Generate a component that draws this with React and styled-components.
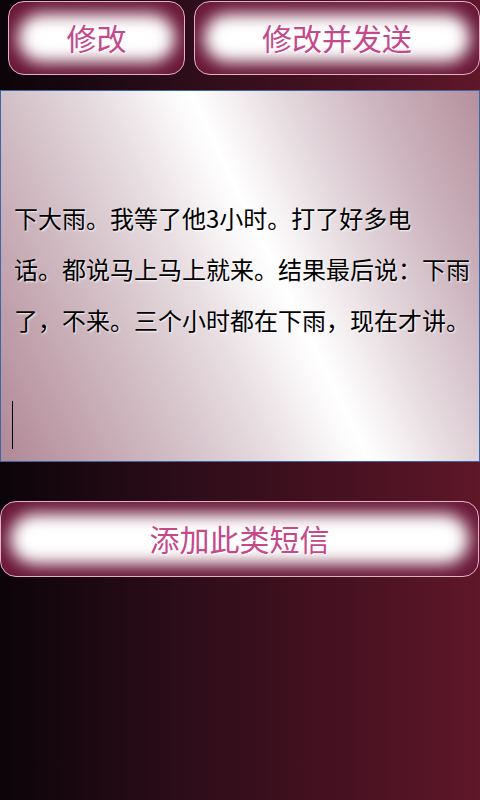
import React from 'react';
import styled, { createGlobalStyle } from 'styled-components';

const Global = createGlobalStyle`
  html, body {
    margin: 0;
    padding: 0;
    height: 100%;
  }
  body {
    font-family: "Noto Sans CJK SC", "Noto Sans", sans-serif;
  }
  #root {
    height: 100%;
  }
`;

const Page = styled.div`
  width: 480px;
  height: 800px;
  overflow: hidden;
  display: flex;
  flex-direction: column;
  background: linear-gradient(90deg, #0c0408 0%, #2a0c18 35%, #4a1222 75%, #5f1729 100%);
`;

const TopRow = styled.div`
  display: flex;
  gap: 9px;
  padding: 1px 0 0 8px;
`;

const GlowButton = styled.button`
  position: relative;
  width: ${(p) => p.$w}px;
  height: ${(p) => p.$h}px;
  padding: 0;
  border: 1px solid #e2b2c4;
  border-radius: 16px;
  background: #6a1838;
  display: flex;
  align-items: center;
  justify-content: center;
  font-family: "Noto Sans CJK SC", "Noto Sans", sans-serif;
  font-size: 30px;
  color: #c4488a;
  text-shadow: 1px 1px 1px #fff, 0 0 2px #fff;
  overflow: hidden;
  cursor: pointer;

  &::before {
    content: '';
    position: absolute;
    inset: 12px 9px;
    border-radius: 28px;
    background: #fff;
    filter: blur(8px);
  }

  span {
    position: relative;
    margin-top: -2px;
  }
`;

const Editor = styled.div`
  margin-top: 15px;
  height: 372px;
  box-sizing: border-box;
  border: 1px solid #3a68a6;
  padding: 101px 4px 0 13px;
  background: linear-gradient(
    64deg,
    #b08896 0%,
    #c2a3ae 14%,
    #d6c4cb 30%,
    #e8dee2 42%,
    #f8f5f6 51%,
    #ffffff 56%,
    #f6f2f4 61%,
    #e4d8dd 70%,
    #ccb3bd 84%,
    #b5909c 100%
  );
  font-size: 24px;
  line-height: 51px;
  color: #000;
  text-shadow: 1px 1px 2px rgba(255, 255, 255, 0.9);
`;

const Line = styled.div`
  white-space: nowrap;
  height: 51px;
`;

const Caret = styled.span`
  display: inline-block;
  width: 1px;
  height: 48px;
  background: #000;
  vertical-align: middle;
  margin-left: -2px;
`;

const BottomWrap = styled.div`
  margin-top: 39px;
`;

const lines = [
  '下大雨。我等了他3小时。打了好多电',
  '话。都说马上马上就来。结果最后说：下雨',
  '了，不来。三个小时都在下雨，现在才讲。',
  '',
];

export default function App() {
  return (
    <>
      <Global />
      <Page>
        <TopRow>
          <GlowButton $w={177} $h={74}>
            <span>修改</span>
          </GlowButton>
          <GlowButton $w={286} $h={74}>
            <span>修改并发送</span>
          </GlowButton>
        </TopRow>
        <Editor>
          {lines.map((l, i) => (
            <Line key={i}>{l}</Line>
          ))}
          <Line>
            <Caret />
          </Line>
        </Editor>
        <BottomWrap>
          <GlowButton $w={479} $h={76}>
            <span>添加此类短信</span>
          </GlowButton>
        </BottomWrap>
      </Page>
    </>
  );
}
